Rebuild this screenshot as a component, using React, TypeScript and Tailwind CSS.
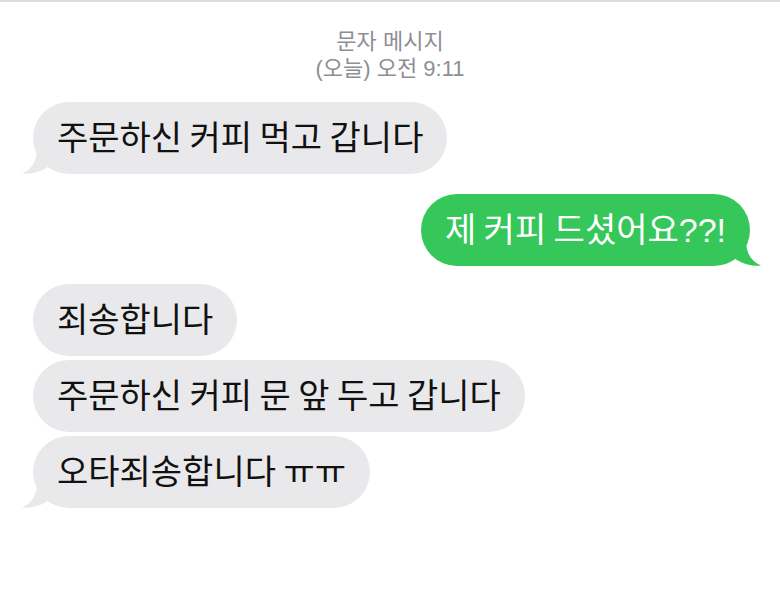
import type { ReactNode } from 'react';

const FONT = "font-['Liberation_Sans','Noto_Sans_CJK_KR',sans-serif]";

function Tail({ side, color }: { side: 'left' | 'right'; color: string }) {
  return (
    <svg
      width="32"
      height="26"
      viewBox="0 0 32 26"
      className={
        side === 'left'
          ? 'absolute -left-[12px] bottom-0'
          : 'absolute -right-[12px] bottom-0 -scale-x-100'
      }
    >
      <path d="M16 0 C16 13 11 21 1 25.6 C9 26.4 18 24.6 26 19.5 L32 10 L32 0 Z" fill={color} />
    </svg>
  );
}

interface BubbleProps {
  children: ReactNode;
  side: 'left' | 'right';
  tail?: boolean;
}

function Bubble({ children, side, tail }: BubbleProps) {
  const incoming = side === 'left';
  const color = incoming ? '#e9e9eb' : '#35c759';
  return (
    <div className={incoming ? 'flex justify-start pl-[33px]' : 'flex justify-end pr-[30px]'}>
      <div
        className={
          'relative h-[72px] flex items-center px-[24px] rounded-full text-[34px] leading-none [word-spacing:-2px] ' +
          (incoming ? 'bg-[#e9e9eb] text-[#111111]' : 'bg-[#35c759] text-white')
        }
      >
        {tail && <Tail side={side} color={color} />}
        <span className="relative whitespace-nowrap">{children}</span>
      </div>
    </div>
  );
}

export default function App() {
  return (
    <div className={`w-[780px] h-[600px] bg-white border-t-2 border-[#dcdcdc] overflow-hidden ${FONT}`}>
      {/* Header */}
      <div className="pt-[26px] flex flex-col items-center text-[22px] leading-[27px] text-[#8e8e93]">
        <span>문자 메시지</span>
        <span>(오늘) 오전 9:11</span>
      </div>

      <div className="mt-[20px] flex flex-col">
        <Bubble side="left" tail>
          주문하신 커피 먹고 갑니다
        </Bubble>

        <div className="mt-[20px]">
          <Bubble side="right" tail>
            제 커피 드셨어요??!
          </Bubble>
        </div>

        <div className="mt-[18px] flex flex-col gap-[4px]">
          <Bubble side="left">죄송합니다</Bubble>
          <Bubble side="left">주문하신 커피 문 앞 두고 갑니다</Bubble>
          <Bubble side="left" tail>
            오타죄송합니다 ㅠㅠ
          </Bubble>
        </div>
      </div>
    </div>
  );
}
